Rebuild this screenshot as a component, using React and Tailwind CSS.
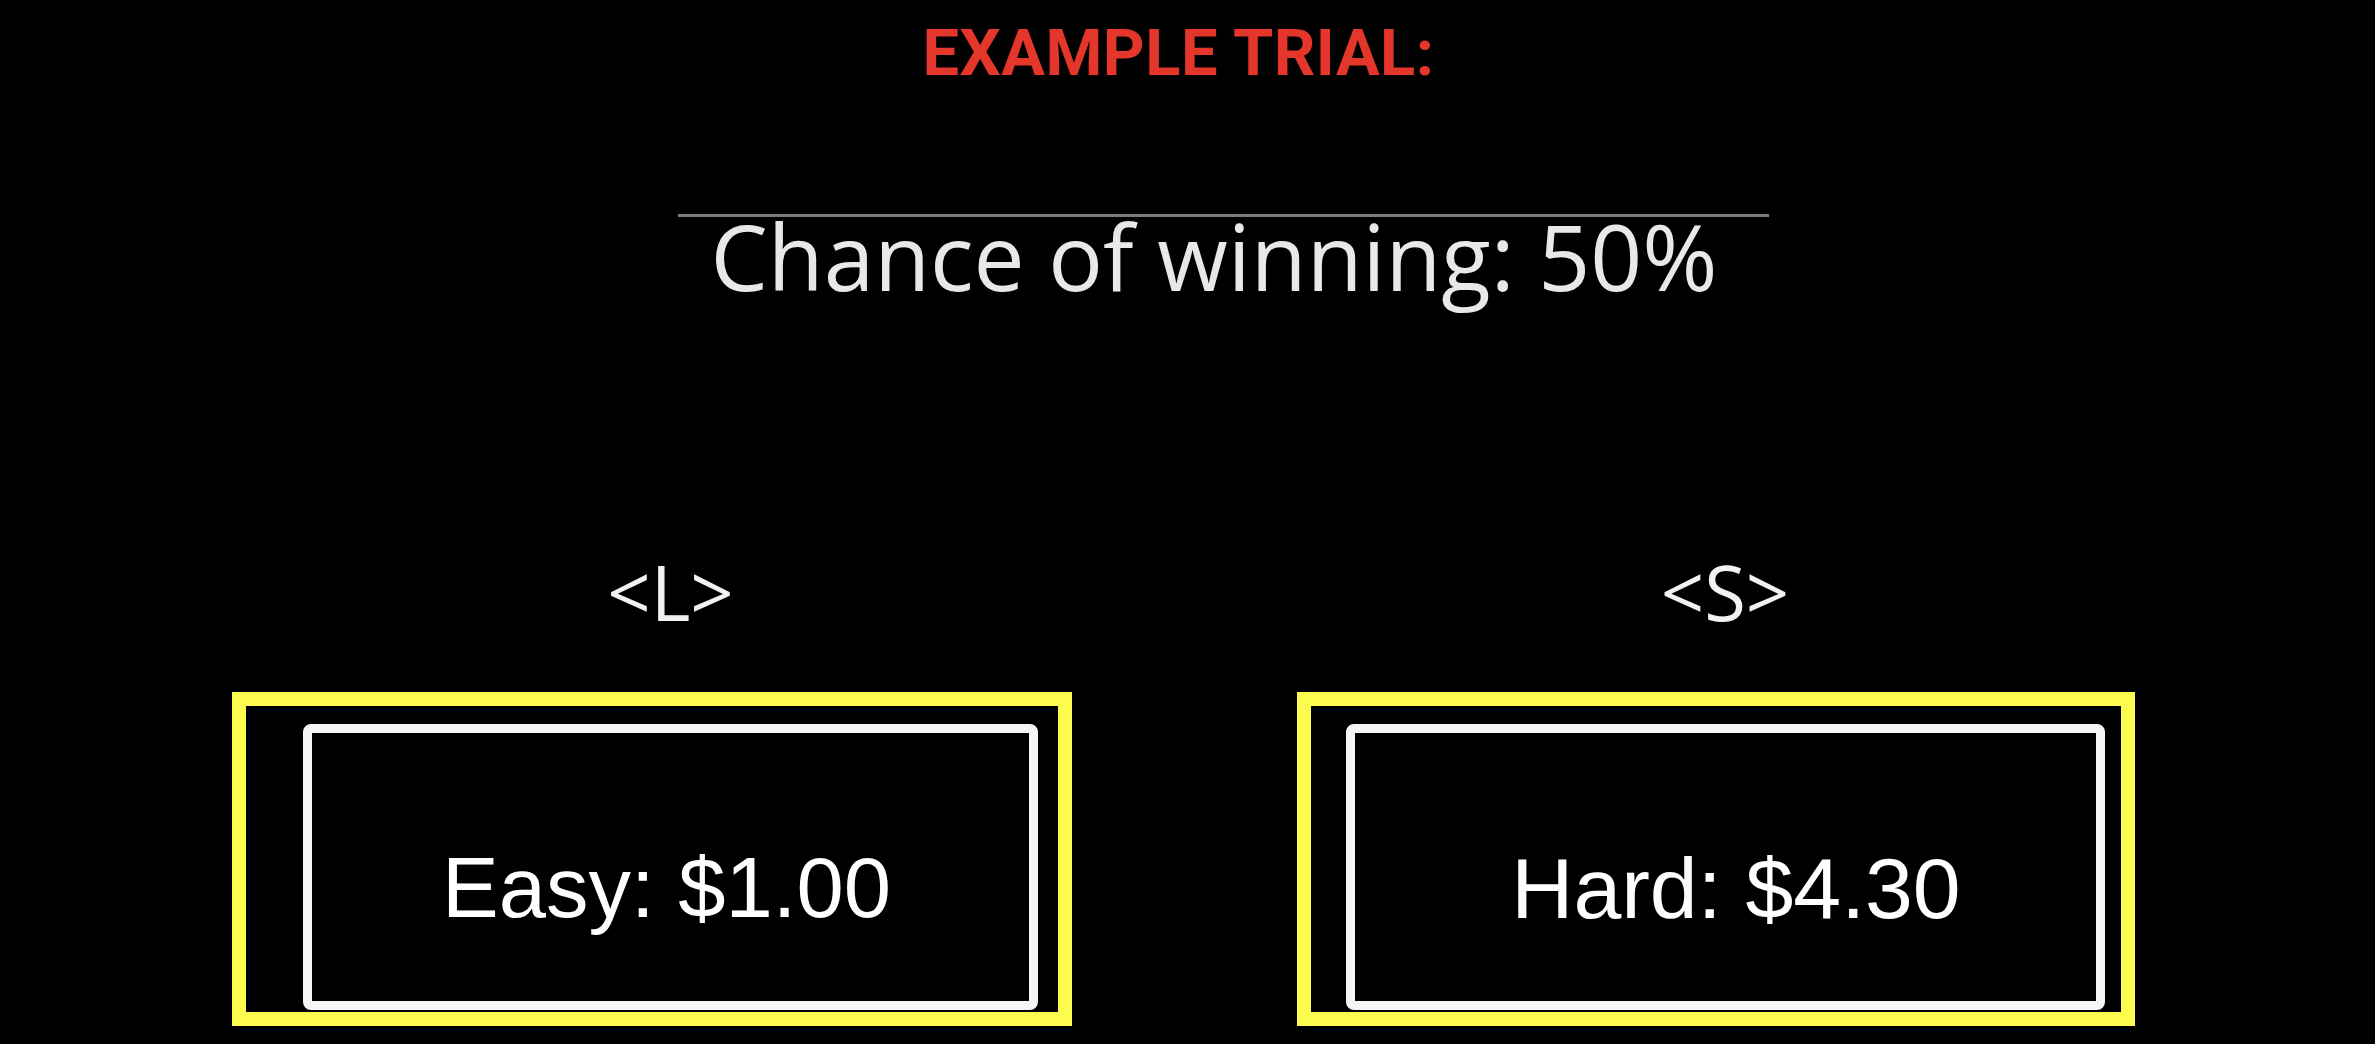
export default function App() {
  return (
    <div className="w-[2375px] h-[1044px] bg-black overflow-hidden flex flex-col">
      {/* Title */}
      <div className="pt-[21px] pr-[18px] flex justify-center">
        <div className="text-[65px] leading-none font-bold tracking-[0.5px] text-[#e4362a] whitespace-nowrap [font-family:Roboto,'Liberation_Sans',Arial,sans-serif]">
          EXAMPLE TRIAL:
        </div>
      </div>

      {/* Divider line */}
      <div className="mt-[128px] ml-[678px] w-[1091px] h-[3px] bg-[#7a7a7a]" />

      {/* Chance text */}
      <div className="mt-[9px] pl-[53px] flex justify-center">
        <div className="text-[91px] leading-[60px] text-[#e8e8e8] whitespace-nowrap [font-family:'Open_Sans','Noto_Sans',sans-serif]">
          Chance of winning: 50%
        </div>
      </div>

      {/* Options row */}
      <div className="mt-[278px] pl-[232px] flex gap-[225px]">
        {/* Left option */}
        <div className="w-[840px] flex flex-col">
          <div className="pl-[37px] flex justify-center text-[76px] leading-[56px] text-[#f2f2f2] [font-family:'Open_Sans','Noto_Sans',sans-serif]">
            &lt;L&gt;
          </div>
          <div className="mt-[72px] h-[334px] border-[14px] border-[#fdfb50] pl-[57px] pr-[20px] pt-[18px] pb-[2px] flex">
            <div className="flex-1 border-[9px] border-[#f5f5f5] rounded-[8px] pt-[40px] pr-[8px] flex items-center justify-center">
              <span className="text-[85px] leading-none text-white whitespace-nowrap [font-family:'Liberation_Sans',Arial,sans-serif]">
                Easy: $1.00
              </span>
            </div>
          </div>
        </div>

        {/* Right option */}
        <div className="w-[838px] flex flex-col">
          <div className="pl-[18px] flex justify-center text-[76px] leading-[56px] text-[#f2f2f2] [font-family:'Open_Sans','Noto_Sans',sans-serif]">
            &lt;S&gt;
          </div>
          <div className="mt-[72px] h-[334px] border-[14px] border-[#fdfb50] pl-[35px] pr-[16px] pt-[18px] pb-[2px] flex">
            <div className="flex-1 border-[9px] border-[#f5f5f5] rounded-[8px] pt-[42px] pl-[21px] flex items-center justify-center">
              <span className="text-[86px] leading-none text-white whitespace-nowrap [font-family:'Liberation_Sans',Arial,sans-serif]">
                Hard: $4.30
              </span>
            </div>
          </div>
        </div>
      </div>
    </div>
  );
}
